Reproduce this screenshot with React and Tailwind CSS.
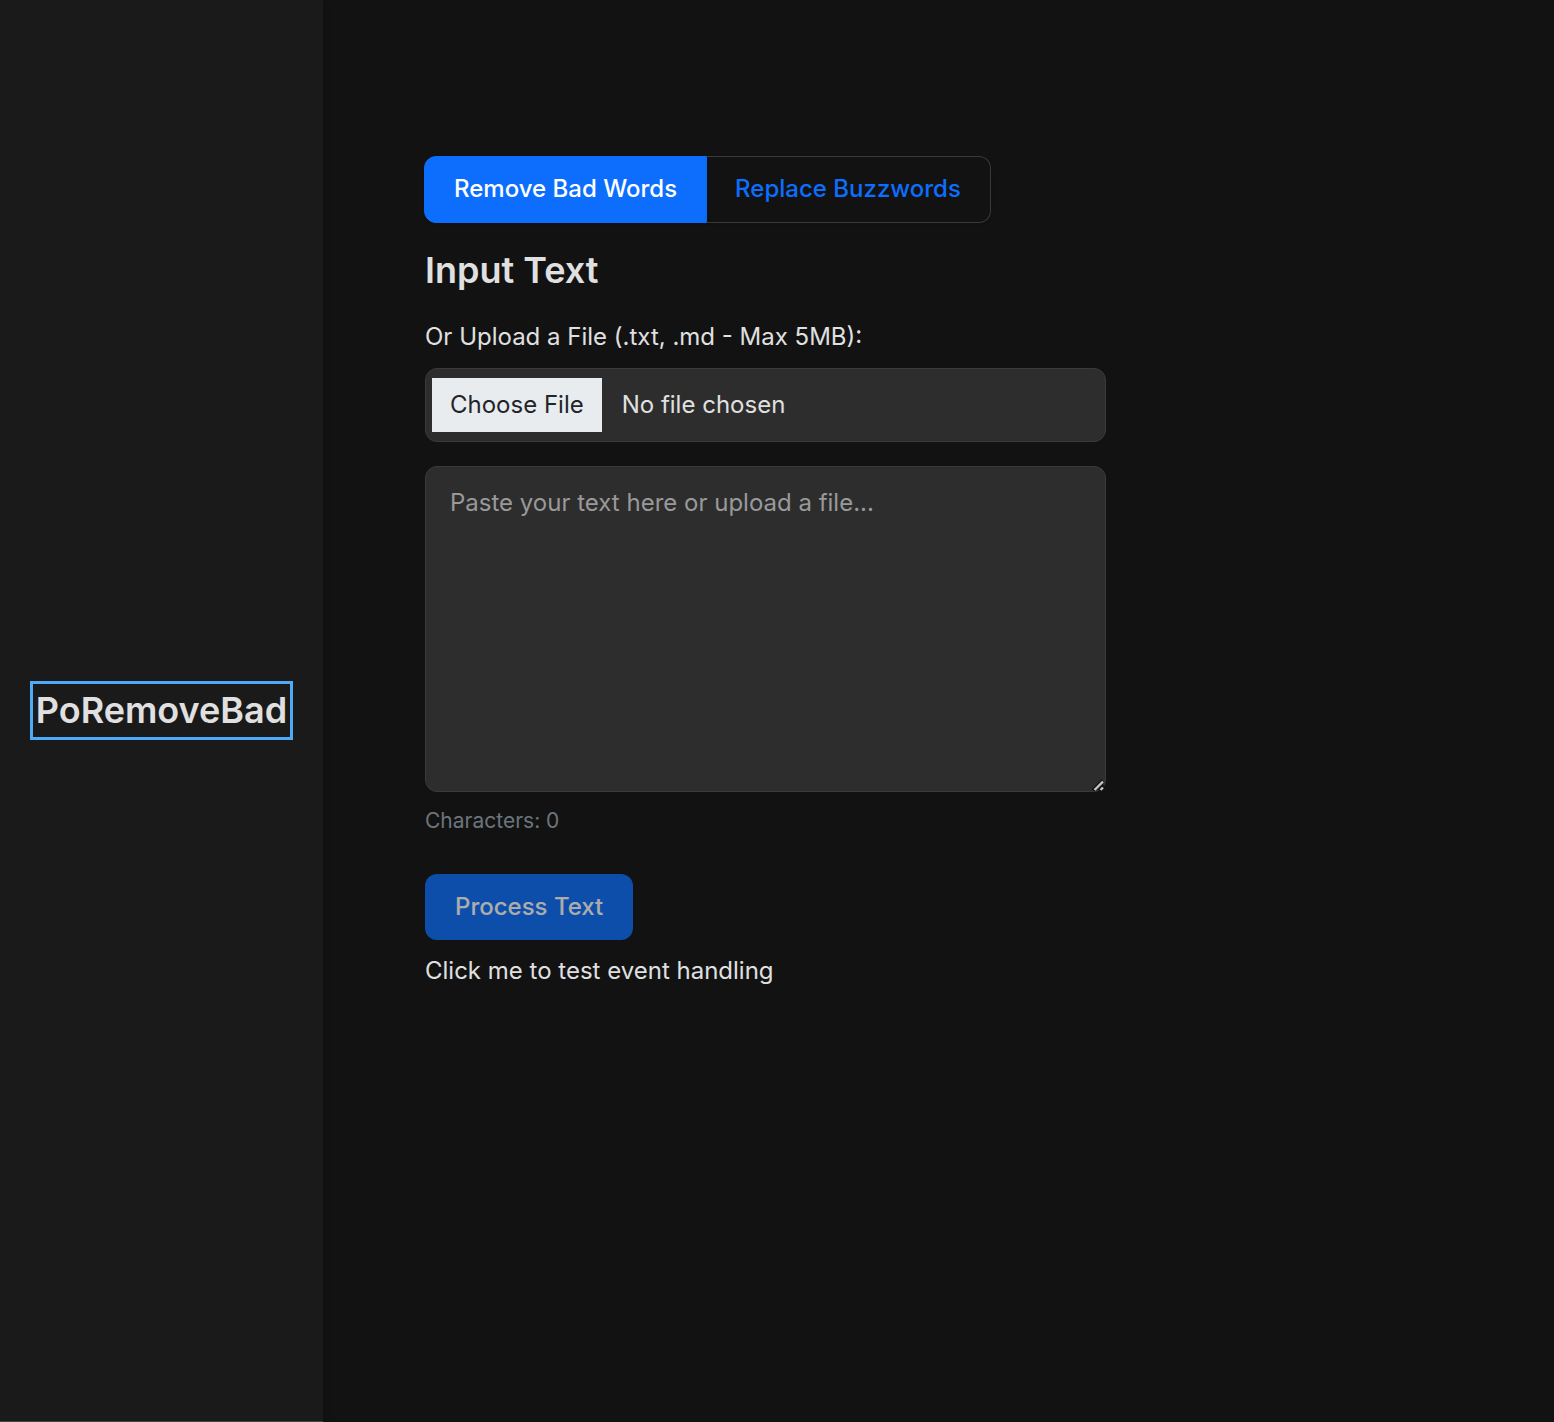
import { useState } from "react";

export default function App() {
  const [text, setText] = useState("");
  return (
    <div className="flex min-h-screen bg-[#121212] font-['Inter',sans-serif] text-2xl leading-9 text-[#e0e0e0]">
      <aside className="flex w-[323px] shrink-0 items-center justify-center border-b border-[#444] bg-[#1a1a1a] shadow-[0_2px_6px_rgba(0,0,0,0.25)]">
        <h1 className="border-3 border-[#4dabf7] px-[3px] text-4xl font-semibold leading-[53px]">PoRemoveBad</h1>
      </aside>
      <main className="flex-1 px-[102px] pt-39">
        <div className="max-w-[681px]">
          <div className="-ml-px flex">
            <button type="button" className="rounded-l-xl border border-[#0d6efd] bg-[#0d6efd] px-[29px] pt-3.5 pb-[15px] font-medium text-white shadow-sm">
              Remove Bad Words
            </button>
            <button type="button" className="rounded-r-xl border border-l-0 border-[#3a3a3a] pt-3.5 pr-[29px] pb-[15px] pl-7 font-medium text-[#0d6efd] shadow-sm">
              Replace Buzzwords
            </button>
          </div>
          <h2 className="mt-6 text-4xl font-semibold leading-[46px]">Input Text</h2>
          <label htmlFor="file" className="mt-[26px] block">Or Upload a File (.txt, .md - Max 5MB):</label>
          <input
            id="file"
            type="file"
            accept=".txt,.md"
            className="mt-[13px] block w-full rounded-xl border border-[#3a3a3a] bg-[#2d2d2d] px-1.5 py-[9px] file:mr-5 file:bg-[#e9ecef] file:px-[18px] file:py-[9px] file:text-[#212529]"
          />
          <div className="relative mt-6">
            <textarea
              aria-label="Input text"
              value={text}
              onChange={(e) => setText(e.target.value)}
              placeholder="Paste your text here or upload a file..."
              className="block h-[326px] w-full resize-y rounded-xl border border-[#3a3a3a] bg-[#2d2d2d] px-6 py-[18px] placeholder:text-[#999] [&::-webkit-resizer]:bg-transparent"
            />
            <svg aria-hidden="true" viewBox="0 0 14 14" className="pointer-events-none absolute right-0 bottom-0 size-3.5" fill="none">
              <path d="M1 12.5 11 2.5M7 12.5 12 7.5" stroke="#121212" strokeWidth="3.5" />
              <path d="M2.5 12 11 3.5M8.5 12 11 9.5" stroke="#c4c4c4" strokeWidth="2.4" />
            </svg>
          </div>
          <p className="mt-[13px] text-[21px] leading-8 text-[#6c757d]">Characters: {text.length}</p>
          <button type="button" disabled className="mt-[37px] rounded-xl bg-[#0d6efd] px-[30px] py-[15px] font-medium text-white opacity-65">
            Process Text
          </button>
          <p className="mt-[13px]">Click me to test event handling</p>
        </div>
      </main>
    </div>
  );
}
